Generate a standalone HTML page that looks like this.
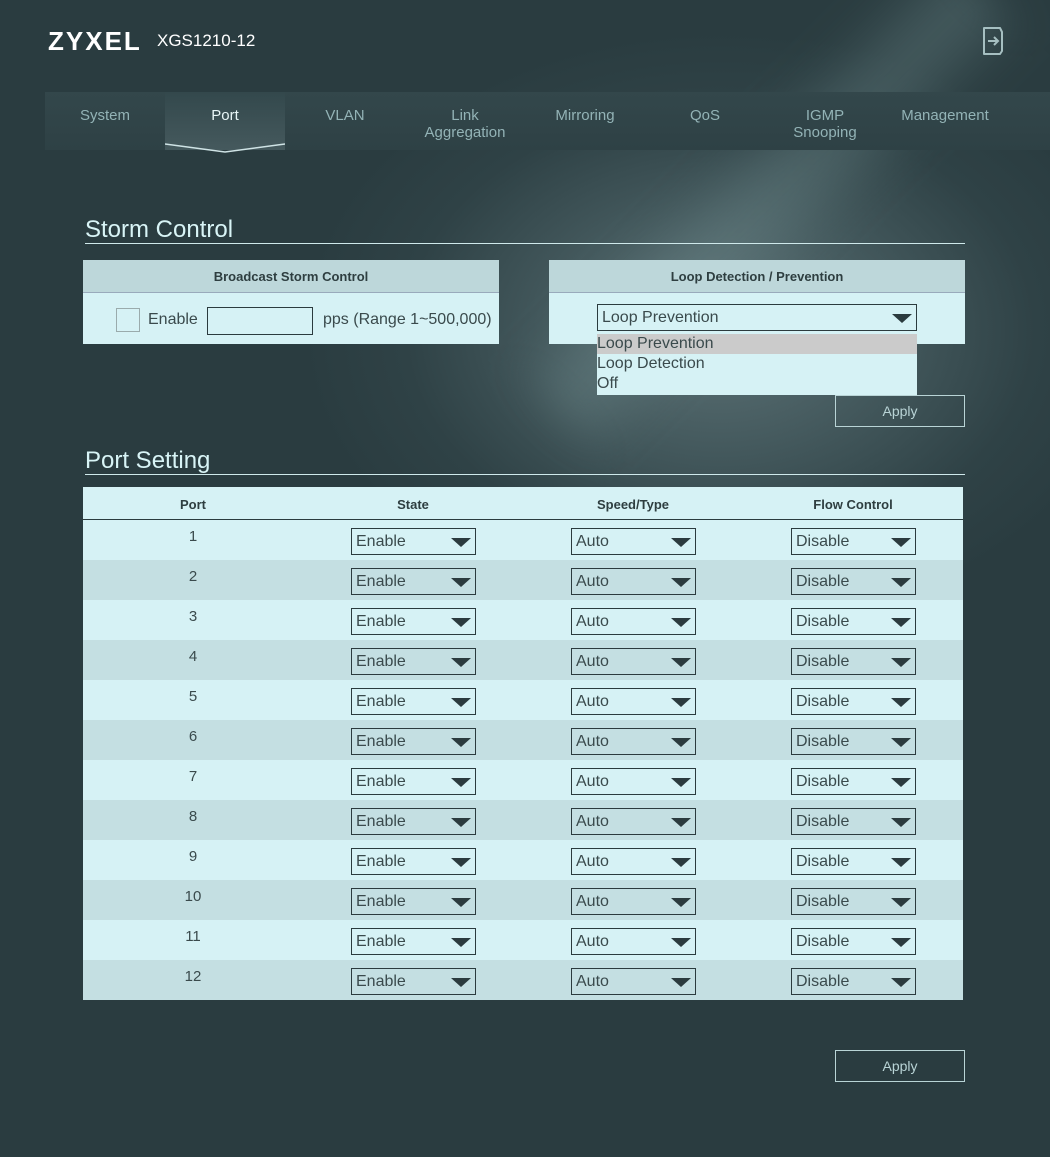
<!DOCTYPE html>
<html><head><meta charset="utf-8">
<style>
*{margin:0;padding:0;box-sizing:border-box}
body{width:1050px;height:1157px;overflow:hidden;font-family:"Liberation Sans",Arial,sans-serif;
background:radial-gradient(ellipse 420px 300px at 720px 330px,#5c7276 0%,#44595d 40%,#2f4246 75%,#2a3c40 100%);position:relative}
.a{position:absolute}
.logo{left:48px;top:26px;color:#fff;font-size:26px;font-weight:bold;letter-spacing:2px}
.model{left:157px;top:31px;color:#fff;font-size:17px}
.navband{left:45px;top:92px;width:1005px;height:58px;background:linear-gradient(#33474b,#2e4145)}
.tab{top:107px;width:120px;text-align:center;color:#93b3b6;font-size:15px;line-height:17px}
.act{left:165px;top:92px;width:120px;height:58px;background:linear-gradient(#33484c,#45595d)}
.h2{color:#d8f4f6;font-size:24px}
.line{height:1px;background:#cfe9eb}
.panel{background:#d6f2f5}
.ph{background:#bdd7da;color:#2e3e40;font-size:13px;font-weight:bold;text-align:center;height:33px;line-height:33px;border-bottom:1px solid #9ab}
.btn{border:1px solid #b9d4d6;color:#b9d4d6;font-size:14px;text-align:center;width:130px;height:32px;line-height:30px}
.sel{position:absolute;width:125px;height:27px;border:1px solid #2b3b3e;color:#3a4a4c;font-size:16px;line-height:25px;padding-left:4px}
.sel:after{content:"";position:absolute;right:4px;top:9px;border-left:10px solid transparent;border-right:10px solid transparent;border-top:9px solid #2b3b3e}
.row{position:absolute;left:83px;width:880px;height:40px}
.pn{position:absolute;left:0;width:220px;text-align:center;top:8px;color:#3a4a4c;font-size:15px}
.streak{left:700px;top:-100px;width:140px;height:600px;transform:rotate(45deg);background:linear-gradient(90deg,rgba(120,150,152,0),rgba(120,150,152,.35),rgba(120,150,152,0));filter:blur(20px)}
</style></head><body>
<div class="a streak"></div>
<div class="a logo">ZYXEL</div>
<div class="a model">XGS1210-12</div>
<svg class="a" style="left:981px;top:26px" width="24" height="30" viewBox="0 0 24 30"><path d="M3 2H19L21 6V25L19 28H3Z" fill="none" stroke="#a6bfc1" stroke-width="2" stroke-linejoin="round"/><path d="M7 15H17M13 11L17 15L13 19" fill="none" stroke="#a6bfc1" stroke-width="2"/></svg>
<div class="a navband"></div>
<div class="a act"></div>
<svg class="a" style="left:165px;top:140px" width="120" height="16"><path d="M0 4L60 12L120 4" fill="none" stroke="#cfe3e5" stroke-width="1.5"/></svg>
<div class="a tab" style="left:45px">System</div>
<div class="a tab" style="left:165px;color:#e8f6f7">Port</div>
<div class="a tab" style="left:285px">VLAN</div>
<div class="a tab" style="left:405px">Link<br>Aggregation</div>
<div class="a tab" style="left:525px">Mirroring</div>
<div class="a tab" style="left:645px">QoS</div>
<div class="a tab" style="left:765px">IGMP<br>Snooping</div>
<div class="a tab" style="left:885px">Management</div>

<div class="a h2" style="left:85px;top:216px">Storm Control</div>
<div class="a line" style="left:85px;top:243px;width:880px"></div>
<div class="a panel" style="left:83px;top:260px;width:416px;height:84px">
<div class="ph">Broadcast Storm Control</div>
<div class="a" style="left:33px;top:48px;width:24px;height:24px;border:1px solid #9aabac"></div>
<div class="a" style="left:65px;top:51px;font-size:16px;color:#3a4a4c">Enable</div>
<div class="a" style="left:124px;top:47px;width:106px;height:28px;border:1px solid #2b3b3e"></div>
<div class="a" style="left:240px;top:51px;font-size:16px;color:#3a4a4c">pps (Range 1~500,000)</div>
</div>
<div class="a panel" style="left:549px;top:260px;width:416px;height:84px">
<div class="ph">Loop Detection / Prevention</div>
<div class="sel" style="left:48px;top:44px;width:320px">Loop Prevention</div>
</div>
<div class="a" style="left:597px;top:334px;width:320px;height:61px;background:#d6f2f5;color:#3a4a4c;font-size:16px;line-height:20px">
<div style="background:#cbcbcb;height:20px">Loop Prevention</div><div>Loop Detection</div><div>Off</div></div>
<div class="a btn" style="left:835px;top:395px">Apply</div>

<div class="a h2" style="left:85px;top:447px">Port Setting</div>
<div class="a line" style="left:85px;top:474px;width:880px"></div>
<div class="a panel" style="left:83px;top:487px;width:880px;height:513px"></div>
<div class="a" style="left:83px;top:487px;width:880px;height:33px;border-bottom:1px solid #2b3b3e;font-size:13px;font-weight:bold;color:#2e3e40">
<div class="a" style="left:0;width:220px;text-align:center;top:10px">Port</div>
<div class="a" style="left:220px;width:220px;text-align:center;top:10px">State</div>
<div class="a" style="left:440px;width:220px;text-align:center;top:10px">Speed/Type</div>
<div class="a" style="left:660px;width:220px;text-align:center;top:10px">Flow Control</div>
</div>
<div class="row" style="top:520px;background:#d6f2f5"><div class="pn">1</div><div class="sel" style="left:268px;top:8px">Enable</div><div class="sel" style="left:488px;top:8px">Auto</div><div class="sel" style="left:708px;top:8px">Disable</div></div>
<div class="row" style="top:560px;background:#c4dfe2"><div class="pn">2</div><div class="sel" style="left:268px;top:8px">Enable</div><div class="sel" style="left:488px;top:8px">Auto</div><div class="sel" style="left:708px;top:8px">Disable</div></div>
<div class="row" style="top:600px;background:#d6f2f5"><div class="pn">3</div><div class="sel" style="left:268px;top:8px">Enable</div><div class="sel" style="left:488px;top:8px">Auto</div><div class="sel" style="left:708px;top:8px">Disable</div></div>
<div class="row" style="top:640px;background:#c4dfe2"><div class="pn">4</div><div class="sel" style="left:268px;top:8px">Enable</div><div class="sel" style="left:488px;top:8px">Auto</div><div class="sel" style="left:708px;top:8px">Disable</div></div>
<div class="row" style="top:680px;background:#d6f2f5"><div class="pn">5</div><div class="sel" style="left:268px;top:8px">Enable</div><div class="sel" style="left:488px;top:8px">Auto</div><div class="sel" style="left:708px;top:8px">Disable</div></div>
<div class="row" style="top:720px;background:#c4dfe2"><div class="pn">6</div><div class="sel" style="left:268px;top:8px">Enable</div><div class="sel" style="left:488px;top:8px">Auto</div><div class="sel" style="left:708px;top:8px">Disable</div></div>
<div class="row" style="top:760px;background:#d6f2f5"><div class="pn">7</div><div class="sel" style="left:268px;top:8px">Enable</div><div class="sel" style="left:488px;top:8px">Auto</div><div class="sel" style="left:708px;top:8px">Disable</div></div>
<div class="row" style="top:800px;background:#c4dfe2"><div class="pn">8</div><div class="sel" style="left:268px;top:8px">Enable</div><div class="sel" style="left:488px;top:8px">Auto</div><div class="sel" style="left:708px;top:8px">Disable</div></div>
<div class="row" style="top:840px;background:#d6f2f5"><div class="pn">9</div><div class="sel" style="left:268px;top:8px">Enable</div><div class="sel" style="left:488px;top:8px">Auto</div><div class="sel" style="left:708px;top:8px">Disable</div></div>
<div class="row" style="top:880px;background:#c4dfe2"><div class="pn">10</div><div class="sel" style="left:268px;top:8px">Enable</div><div class="sel" style="left:488px;top:8px">Auto</div><div class="sel" style="left:708px;top:8px">Disable</div></div>
<div class="row" style="top:920px;background:#d6f2f5"><div class="pn">11</div><div class="sel" style="left:268px;top:8px">Enable</div><div class="sel" style="left:488px;top:8px">Auto</div><div class="sel" style="left:708px;top:8px">Disable</div></div>
<div class="row" style="top:960px;background:#c4dfe2"><div class="pn">12</div><div class="sel" style="left:268px;top:8px">Enable</div><div class="sel" style="left:488px;top:8px">Auto</div><div class="sel" style="left:708px;top:8px">Disable</div></div>
<div class="a btn" style="left:835px;top:1050px">Apply</div>
</body></html>
